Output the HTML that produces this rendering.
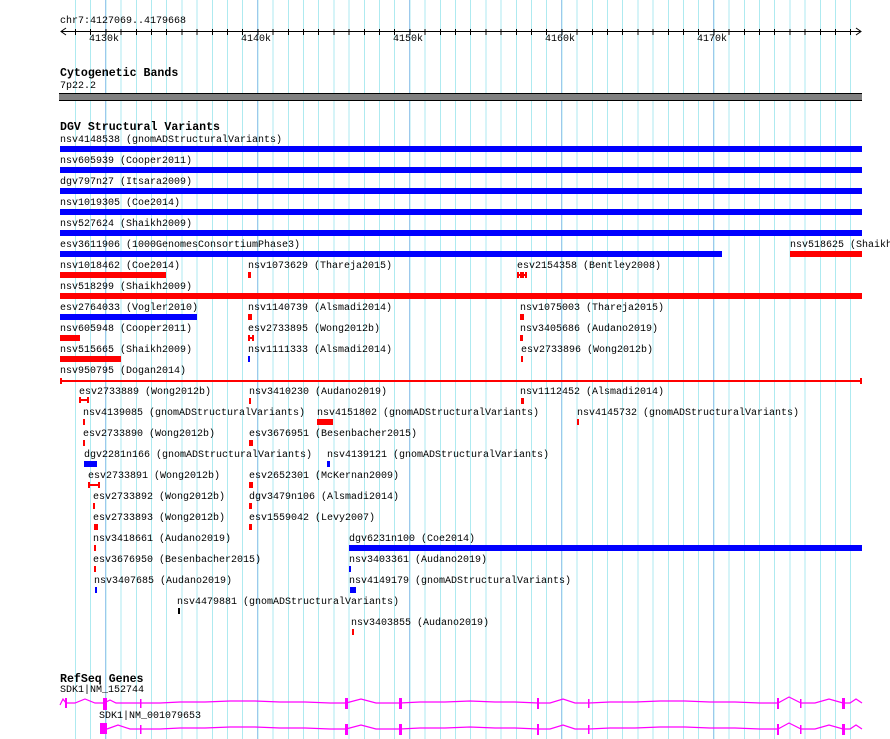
<!DOCTYPE html>
<html><head><meta charset="utf-8"><style>
html,body{margin:0;padding:0;background:#fff;width:890px;height:739px;overflow:hidden;position:relative}
.l{position:absolute;font:10px/12px "Liberation Mono",monospace;color:#000;white-space:pre}
.t{position:absolute;font:bold 11.6px/13px "Liberation Mono",monospace;color:#000;white-space:pre}
.b{position:absolute;height:6px}
.r{background:#f00}.u{background:#00f}.k{background:#000}
.g{position:absolute;top:0;width:1px;height:739px;background:#9cc9ec}
.h{position:absolute;height:6px}
.h:before,.h:after{content:"";position:absolute;top:0;width:2px;height:6px;background:#f00}
.h:before{left:0}.h:after{right:0}
.h i{position:absolute;left:0;right:0;top:2px;height:2px;background:#f00}
</style></head><body>
<div style="position:absolute;left:74.9px;top:0;width:777px;height:739px;background:repeating-linear-gradient(90deg,#aeeaf0 0 1px,transparent 1px 15.2px)"></div>
<div class="g" style="left:105px"></div><div class="g" style="left:257px"></div><div class="g" style="left:409px"></div><div class="g" style="left:561px"></div><div class="g" style="left:713px"></div>

<div class="l" style="left:60px;top:16px">chr7:4127069..4179668</div>
<svg style="position:absolute;left:0;top:0" width="890" height="40"><line x1="61" y1="31.5" x2="861" y2="31.5" stroke="#000"/><polyline points="66,28 61,31.5 66,35" fill="none" stroke="#000"/><polyline points="856,28 861,31.5 856,35" fill="none" stroke="#000"/></svg>
<div style="position:absolute;left:74.9px;top:29px;width:777px;height:6px;background:repeating-linear-gradient(90deg,#000 0 1px,transparent 1px 15.2px)"></div>
<div class="l" style="left:89px;top:34px">4130k</div><div class="l" style="left:241px;top:34px">4140k</div><div class="l" style="left:393px;top:34px">4150k</div><div class="l" style="left:545px;top:34px">4160k</div><div class="l" style="left:697px;top:34px">4170k</div>

<div class="t" style="left:60px;top:67px">Cytogenetic Bands</div>
<div class="l" style="left:60px;top:81px">7p22.2</div>
<div style="position:absolute;left:59px;top:93px;width:803px;height:6px;background:#808080;border-top:1px solid #000;border-bottom:1px solid #000"></div>

<div class="t" style="left:60px;top:121px">DGV Structural Variants</div>
<div class="l" style="left:60px;top:135px">nsv4148538 (gnomADStructuralVariants)</div><div class="b u" style="left:60px;top:146px;width:802px"></div>
<div class="l" style="left:60px;top:156px">nsv605939 (Cooper2011)</div><div class="b u" style="left:60px;top:167px;width:802px"></div>
<div class="l" style="left:60px;top:177px">dgv797n27 (Itsara2009)</div><div class="b u" style="left:60px;top:188px;width:802px"></div>
<div class="l" style="left:60px;top:198px">nsv1019305 (Coe2014)</div><div class="b u" style="left:60px;top:209px;width:802px"></div>
<div class="l" style="left:60px;top:219px">nsv527624 (Shaikh2009)</div><div class="b u" style="left:60px;top:230px;width:802px"></div>
<div class="l" style="left:60px;top:240px">esv3611906 (1000GenomesConsortiumPhase3)</div><div class="b u" style="left:60px;top:251px;width:662px"></div>
<div class="l" style="left:790px;top:240px">nsv518625 (Shaikh2009)</div><div class="b r" style="left:790px;top:251px;width:72px"></div>
<div class="l" style="left:60px;top:261px">nsv1018462 (Coe2014)</div><div class="b r" style="left:60px;top:272px;width:106px"></div>
<div class="l" style="left:248px;top:261px">nsv1073629 (Thareja2015)</div><div class="b r" style="left:248px;top:272px;width:3px"></div>
<div class="l" style="left:517px;top:261px">esv2154358 (Bentley2008)</div><div class="h" style="left:517px;top:272px;width:5px"><i></i></div><div class="h" style="left:522px;top:272px;width:5px"><i></i></div>
<div class="l" style="left:60px;top:282px">nsv518299 (Shaikh2009)</div><div class="b r" style="left:60px;top:293px;width:802px"></div>
<div class="l" style="left:60px;top:303px">esv2764033 (Vogler2010)</div><div class="b u" style="left:60px;top:314px;width:137px"></div>
<div class="l" style="left:248px;top:303px">nsv1140739 (Alsmadi2014)</div><div class="b r" style="left:248px;top:314px;width:4px"></div>
<div class="l" style="left:520px;top:303px">nsv1075003 (Thareja2015)</div><div class="b r" style="left:520px;top:314px;width:4px"></div>
<div class="l" style="left:60px;top:324px">nsv605948 (Cooper2011)</div><div class="b r" style="left:60px;top:335px;width:20px"></div>
<div class="l" style="left:248px;top:324px">esv2733895 (Wong2012b)</div><div class="h" style="left:248px;top:335px;width:6px"><i></i></div>
<div class="l" style="left:520px;top:324px">nsv3405686 (Audano2019)</div><div class="b r" style="left:520px;top:335px;width:3px"></div>
<div class="l" style="left:60px;top:345px">nsv515665 (Shaikh2009)</div><div class="b r" style="left:60px;top:356px;width:61px"></div>
<div class="l" style="left:248px;top:345px">nsv1111333 (Alsmadi2014)</div><div class="b u" style="left:248px;top:356px;width:2px"></div>
<div class="l" style="left:521px;top:345px">esv2733896 (Wong2012b)</div><div class="b r" style="left:521px;top:356px;width:2px"></div>
<div class="l" style="left:60px;top:366px">nsv950795 (Dogan2014)</div>
<div style="position:absolute;left:60px;top:380px;width:802px;height:2px;background:#f00"></div><div class="b r" style="left:60px;top:378px;width:2px"></div><div class="b r" style="left:860px;top:378px;width:2px"></div>
<div class="l" style="left:79px;top:387px">esv2733889 (Wong2012b)</div><div class="h" style="left:79px;top:397px;width:10px"><i></i></div>
<div class="l" style="left:249px;top:387px">nsv3410230 (Audano2019)</div><div class="b r" style="left:249px;top:398px;width:2px"></div>
<div class="l" style="left:520px;top:387px">nsv1112452 (Alsmadi2014)</div><div class="b r" style="left:521px;top:398px;width:3px"></div>
<div class="l" style="left:83px;top:408px">nsv4139085 (gnomADStructuralVariants)</div><div class="b r" style="left:83px;top:419px;width:2px"></div>
<div class="l" style="left:317px;top:408px">nsv4151802 (gnomADStructuralVariants)</div><div class="b r" style="left:317px;top:419px;width:16px"></div>
<div class="l" style="left:577px;top:408px">nsv4145732 (gnomADStructuralVariants)</div><div class="b r" style="left:577px;top:419px;width:2px"></div>
<div class="l" style="left:83px;top:429px">esv2733890 (Wong2012b)</div><div class="b r" style="left:83px;top:440px;width:2px"></div>
<div class="l" style="left:249px;top:429px">esv3676951 (Besenbacher2015)</div><div class="b r" style="left:249px;top:440px;width:4px"></div>
<div class="l" style="left:84px;top:450px">dgv2281n166 (gnomADStructuralVariants)</div><div class="b u" style="left:84px;top:461px;width:13px"></div>
<div class="l" style="left:327px;top:450px">nsv4139121 (gnomADStructuralVariants)</div><div class="b u" style="left:327px;top:461px;width:3px"></div>
<div class="l" style="left:88px;top:471px">esv2733891 (Wong2012b)</div><div class="h" style="left:88px;top:482px;width:12px"><i></i></div>
<div class="l" style="left:249px;top:471px">esv2652301 (McKernan2009)</div><div class="b r" style="left:249px;top:482px;width:4px"></div>
<div class="l" style="left:93px;top:492px">esv2733892 (Wong2012b)</div><div class="b r" style="left:93px;top:503px;width:2px"></div>
<div class="l" style="left:249px;top:492px">dgv3479n106 (Alsmadi2014)</div><div class="b r" style="left:249px;top:503px;width:3px"></div>
<div class="l" style="left:93px;top:513px">esv2733893 (Wong2012b)</div><div class="b r" style="left:94px;top:524px;width:4px"></div>
<div class="l" style="left:249px;top:513px">esv1559042 (Levy2007)</div><div class="b r" style="left:249px;top:524px;width:3px"></div>
<div class="l" style="left:93px;top:534px">nsv3418661 (Audano2019)</div><div class="b r" style="left:94px;top:545px;width:2px"></div>
<div class="l" style="left:349px;top:534px">dgv6231n100 (Coe2014)</div><div class="b u" style="left:349px;top:545px;width:513px"></div>
<div class="l" style="left:93px;top:555px">esv3676950 (Besenbacher2015)</div><div class="b r" style="left:94px;top:566px;width:2px"></div>
<div class="l" style="left:349px;top:555px">nsv3403361 (Audano2019)</div><div class="b u" style="left:349px;top:566px;width:2px"></div>
<div class="l" style="left:94px;top:576px">nsv3407685 (Audano2019)</div><div class="b u" style="left:95px;top:587px;width:2px"></div>
<div class="l" style="left:349px;top:576px">nsv4149179 (gnomADStructuralVariants)</div><div class="b u" style="left:350px;top:587px;width:6px"></div>
<div class="l" style="left:177px;top:597px">nsv4479881 (gnomADStructuralVariants)</div><div class="b k" style="left:178px;top:608px;width:2px"></div>
<div class="l" style="left:351px;top:618px">nsv3403855 (Audano2019)</div><div class="b r" style="left:352px;top:629px;width:2px"></div>

<div class="t" style="left:60px;top:673px">RefSeq Genes</div>
<div class="l" style="left:60px;top:685px">SDK1|NM_152744</div>
<div class="l" style="left:99px;top:711px">SDK1|NM_001079653</div>
<svg style="position:absolute;left:0;top:690px" width="890" height="49">
<g fill="none" stroke="#f0f" stroke-width="1.2">
<polyline points="60,15 63,9 66,13 75,13 85,9 95,13 104,13 110,10 116,13 140,13 160,13 180,12 205,12 230,11 255,11 280,12 305,12 330,13 346,13 361,9 376,13 400,13 420,12 445,12 470,11 495,12 515,12 538,13 550,13 563,9 575,13 589,13 610,12 635,12 660,11 685,11 710,12 735,12 760,13 778,13 789,7 801,13 815,13 829,9 843,13 850,13 856,9 862,13"/>
<polyline points="107,39 118,35 130,39 140,39 160,39 180,38 205,38 230,37 255,37 280,38 305,38 330,39 346,39 361,35 376,39 400,39 420,38 445,38 470,37 495,38 515,38 538,39 550,39 563,35 575,39 589,39 610,38 635,38 660,37 685,37 710,38 735,38 760,39 778,39 789,33 801,39 815,39 829,35 843,39 850,39 856,35 862,39"/>
</g>
<g fill="#f0f">
<rect x="65" y="8" width="2" height="10"/><rect x="103" y="8" width="4" height="12"/><rect x="140" y="9" width="1.5" height="9"/><rect x="345" y="8" width="3" height="11"/><rect x="399" y="8" width="3" height="11"/><rect x="537" y="8" width="2" height="11"/><rect x="588" y="9" width="1.5" height="9"/><rect x="777" y="8" width="2" height="11"/><rect x="800" y="9" width="1.5" height="9"/><rect x="842" y="8" width="3" height="11"/>
<rect x="100" y="33" width="7" height="11"/><rect x="140" y="35" width="1.5" height="9"/><rect x="345" y="34" width="3" height="11"/><rect x="399" y="34" width="3" height="11"/><rect x="537" y="34" width="2" height="11"/><rect x="588" y="35" width="1.5" height="9"/><rect x="777" y="34" width="2" height="11"/><rect x="800" y="35" width="1.5" height="9"/><rect x="842" y="34" width="3" height="11"/>
</g></svg>
</body></html>
